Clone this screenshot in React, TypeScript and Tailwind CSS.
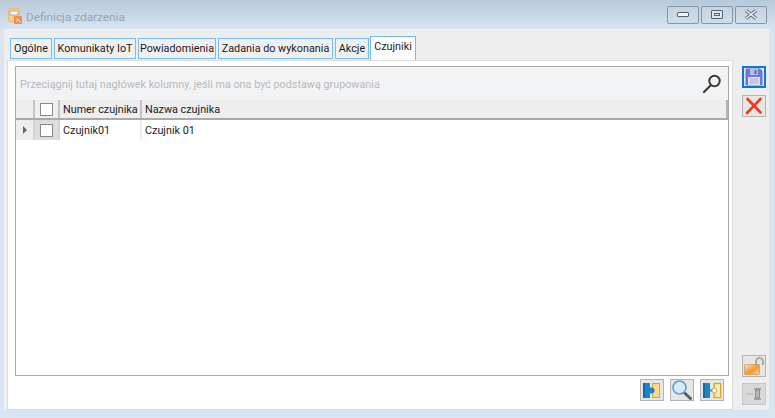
function AppIcon() {
  return (
    <svg width="14" height="16" viewBox="0 0 14 16" className="ml-[8px] mr-[4px] mt-[3px]">
      <rect x="0.5" y="0.5" width="11" height="13" rx="1.5" fill="#fad186" stroke="#eeb968" />
      <rect x="2" y="3" width="8" height="4" fill="#f4f6fa" stroke="#8799b0" strokeWidth="0.7" />
      <rect x="6" y="8" width="8" height="8" fill="#f0914a" />
      <path d="M8 14l3-3M8 11c2.400 0 4 1.600 4 4" stroke="#fde3c8" strokeWidth="1" fill="none" />
    </svg>
  );
}

function WinButton({ children, w }: { children: React.ReactNode; w: string }) {
  return (
    <div className={`${w} h-[18px] flex items-center justify-center rounded-[2px] border border-[#8496ab] bg-gradient-to-b from-[#c6d4e2] to-[#d0deeb]`}>
      {children}
    </div>
  );
}

function SideBtn({ children, selected, muted }: { children: React.ReactNode; selected?: boolean; muted?: boolean }) {
  return (
    <div
      className={
        selected
          ? "w-[24px] h-[22px] flex items-center justify-center border-2 border-[#0a78d7] bg-[#dfe3ea]"
          : muted
            ? "w-[24px] h-[22px] flex items-center justify-center border border-[#c6c6c6] bg-[#d9d9d9]"
            : "w-[24px] h-[22px] flex items-center justify-center border border-[#b4b4b4] bg-[#e6e6e6]"
      }
    >
      {children}
    </div>
  );
}

function LinkIcon({ open }: { open?: boolean }) {
  return (
    <svg width="20" height="17" viewBox="0 0 20 17">
      {open ? (
        <path d="M12 1.500h6.500v14H12v-4.500M12 6V1.500" fill="none" stroke="#e2a21f" strokeWidth="1.400" />
      ) : (
        <rect x="10.500" y="1.500" width="7" height="14" fill="#fbd98c" stroke="#e2a21f" />
      )}
      {open && <rect x="13" y="2.200" width="5" height="12.600" fill="#fde7b4" />}
      <rect x="1" y="1" width="7" height="15" fill="#1d84c8" />
      <rect x="1" y="1" width="2" height="15" fill="#1668a6" />
      {open ? (
        <>
          <path d="M8 8.500h3" stroke="#1d84c8" strokeWidth="2" />
          <circle cx="12.500" cy="8.500" r="2.500" fill="#fff" stroke="#d9a032" />
        </>
      ) : (
        <circle cx="9.500" cy="8.500" r="3" fill="#1d84c8" />
      )}
    </svg>
  );
}

const tabs = [
  { label: "Ogólne", w: "w-[42px]" },
  { label: "Komunikaty IoT", w: "w-[82px]" },
  { label: "Powiadomienia", w: "w-[78px]" },
  { label: "Zadania do wykonania", w: "w-[115px]" },
  { label: "Akcje", w: "w-[34px]" },
];

function App() {
  return (
    <div className="w-[775px] h-[418px] overflow-hidden flex flex-col bg-[#d8e5f3] font-['Roboto',sans-serif] text-[10.8px] text-[#1b1b1b]">
      <div className="h-[29px] shrink-0 flex items-center bg-gradient-to-b from-[#b8c9d9] to-[#d6e4f2]">
        <AppIcon />
        <span className="text-[11.8px] text-[#98a3af] mt-[6px]">Definicja zdarzenia</span>
        <div className="ml-auto mr-[8px] flex gap-[2px]">
          <WinButton w="w-[32px]">
            <div className="w-[12px] h-[5px] rounded-[1px] border border-[#55616f] bg-[#f2f5f8]" />
          </WinButton>
          <WinButton w="w-[32px]">
            <div className="w-[12px] h-[9px] rounded-[1px] border border-[#55616f] flex items-center justify-center bg-[#dfe6ee]">
              <div className="w-[6px] h-[3px] border border-[#55616f]" />
            </div>
          </WinButton>
          <WinButton w="w-[32px]">
            <svg width="14" height="11" viewBox="0 0 14 11">
              <path d="M2 1.500l10 8M12 1.500l-10 8" stroke="#5a6675" strokeWidth="3.400" />
              <path d="M2 1.500l10 8M12 1.500l-10 8" stroke="#f2f5f8" strokeWidth="1.600" />
            </svg>
          </WinButton>
        </div>
      </div>

      <div className="ml-[4px] w-[765px] h-[381px] flex bg-[#eeeeee]">
        <div className="ml-[3px] w-[726px] flex flex-col">
          <div className="h-[31px] shrink-0 pl-[3px] flex items-start">
            <div className="flex gap-[2px] mt-[9px]">
              {tabs.map((t) => (
                <div
                  key={t.label}
                  className={`${t.w} h-[21px] pt-[1px] flex items-center justify-center border border-[#74bcf6] bg-[#f0f0f0] whitespace-nowrap`}
                >
                  {t.label}
                </div>
              ))}
            </div>
            <div className="ml-[1px] mt-[7px] w-[46px] h-[24px] pt-[2px] flex justify-center border border-b-0 border-[#74bcf6] bg-white whitespace-nowrap relative z-10">
              Czujniki
            </div>
          </div>

          <div className="flex-1 min-h-0 flex flex-col border border-[#dcdcdc] bg-white pt-[5px] pb-[7px] pl-[7px] pr-[3px]">
            <div className="w-[714px] h-[310px] shrink-0 flex flex-col border border-[#a9a9a9]">
              <div className="h-[33px] shrink-0 flex items-center justify-between pl-[4px] pr-[5px] bg-[#f2f3f5]">
                <span className="text-[#b9b9b9] pt-[3px]">Przeciągnij tutaj nagłówek kolumny, jeśli ma ona być podstawą grupowania</span>
                <svg width="22" height="22" viewBox="0 0 22 22">
                  <circle cx="13.500" cy="8" r="5.200" fill="none" stroke="#3a3a3a" strokeWidth="2" />
                  <path d="M10 12l-7 7" stroke="#3a3a3a" strokeWidth="2.200" strokeLinecap="round" />
                </svg>
              </div>
              <div className="h-[20px] shrink-0 flex bg-[#eeeeee] border-b-2 border-[#a9a9a9]">
                <div className="w-[19px] border-r-2 border-[#c4c4c4]" />
                <div className="w-[25px] border-r-2 border-[#c4c4c4] flex items-center justify-center">
                  <div className="w-[13px] h-[13px] border border-[#8a8a8a] bg-white" />
                </div>
                <div className="w-[82px] pl-[3px] pt-[2px] border-r-2 border-[#c4c4c4] flex items-center whitespace-nowrap">Numer czujnika</div>
                <div className="flex-1 pl-[3px] pt-[2px] flex items-center">Nazwa czujnika</div>
                <div className="w-[2px] bg-[#b4b4b4]" />
              </div>
              <div className="h-[20px] shrink-0 flex bg-white">
                <div className="w-[19px] border-r-2 border-[#d4d4d4] bg-[#eeeeee] flex items-center justify-center">
                  <div className="w-0 h-0 border-y-[4px] border-y-transparent border-l-[4px] border-l-[#666666]" />
                </div>
                <div className="w-[25px] border-r-2 border-[#d4d4d4] bg-[#dddddd] flex items-center justify-center">
                  <div className="w-[13px] h-[13px] border border-[#8a8a8a] bg-white" />
                </div>
                <div className="w-[82px] pl-[3px] pt-[2px] border-r-2 border-[#eeeeee] flex items-center">Czujnik01</div>
                <div className="flex-1 pl-[3px] pt-[2px] flex items-center">Czujnik 01</div>
              </div>
            </div>

            <div className="mt-[3px] w-[714px] pr-[5px] flex justify-end gap-[6px]">
              <SideBtn><LinkIcon /></SideBtn>
              <SideBtn>
                <svg width="22" height="20" viewBox="0 0 22 20">
                  <path d="M13 12.500l6.500 6" stroke="#55606a" strokeWidth="3" strokeLinecap="round" />
                  <circle cx="8.500" cy="7.500" r="6.500" fill="#d3ecfb" stroke="#6b9cc4" strokeWidth="1.600" />
                </svg>
              </SideBtn>
              <SideBtn><LinkIcon open /></SideBtn>
            </div>
          </div>
        </div>

        <div className="ml-[9px] w-[24px] flex flex-col pt-[37px] pb-[5px]">
          <SideBtn selected>
            <svg width="18" height="18" viewBox="0 0 18 18">
              <path d="M1 1h14l2 2v14H1z" fill="#6f7bd6" stroke="#5f6ac0" strokeWidth="0.800" />
              <rect x="5" y="1" width="8" height="6" fill="#b9bfea" />
              <rect x="9.500" y="2" width="2" height="4" fill="#5b64b5" />
              <rect x="3" y="9" width="12" height="8" fill="#dfe1f0" />
              <path d="M4.500 11h9M4.500 13h9M4.500 15h9" stroke="#9ba1d4" strokeWidth="0.800" />
            </svg>
          </SideBtn>
          <div className="mt-[7px]">
            <SideBtn>
              <svg width="18" height="18" viewBox="0 0 18 18">
                <path d="M2.500 2l13 13.500M15.500 2L2 16" stroke="#ee3a1c" strokeWidth="2.600" strokeLinecap="round" />
              </svg>
            </SideBtn>
          </div>
          <div className="mt-auto">
            <SideBtn>
              <svg width="22" height="20" viewBox="0 0 22 20">
                <defs>
                  <linearGradient id="lockBody" x1="0" x2="1" y1="0" y2="1">
                    <stop offset="0" stopColor="#fbe3bf" />
                    <stop offset="0.55" stopColor="#f39a2e" />
                    <stop offset="1" stopColor="#fbd9a6" />
                  </linearGradient>
                </defs>
                <path d="M13 9V5.500a3.500 3.500 0 0 1 7 0V9" fill="none" stroke="#a9a9a9" strokeWidth="2" />
                <rect x="1.500" y="8.500" width="15" height="10" rx="1" fill="url(#lockBody)" stroke="#b88a4a" strokeWidth="0.600" />
              </svg>
            </SideBtn>
          </div>
          <div className="mt-[6px]">
            <SideBtn muted>
              <svg width="18" height="16" viewBox="0 0 18 16">
                <path d="M1 8h8" stroke="#bdbdbd" strokeWidth="1.200" />
                <path d="M9 3h7M9 13h7" stroke="#8f8f8f" strokeWidth="1.400" fill="none" />
                <rect x="10.500" y="4" width="4" height="8" fill="#b5b5b5" stroke="#8f8f8f" strokeWidth="1" />
              </svg>
            </SideBtn>
          </div>
        </div>
      </div>
    </div>
  );
}

export default App;
